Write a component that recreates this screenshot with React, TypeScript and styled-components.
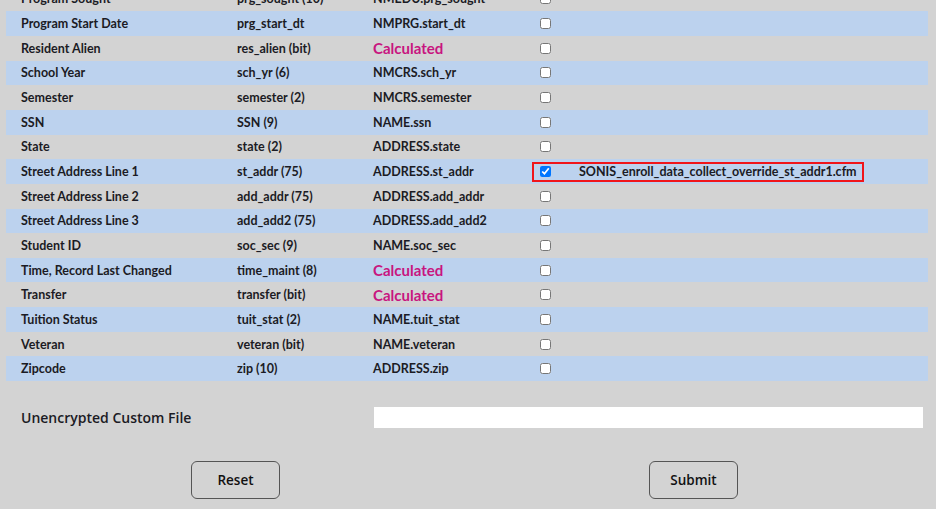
import React from "react";
import styled, { createGlobalStyle } from "styled-components";

type Field = {
  label: string;
  column: string;
  source: string;
  calculated?: boolean;
  override?: string;
};

const fields: Field[] = [
  { label: "Program Sought", column: "prg_sought (10)", source: "NMEDU.prg_sought" },
  { label: "Program Start Date", column: "prg_start_dt", source: "NMPRG.start_dt" },
  { label: "Resident Alien", column: "res_alien (bit)", source: "Calculated", calculated: true },
  { label: "School Year", column: "sch_yr (6)", source: "NMCRS.sch_yr" },
  { label: "Semester", column: "semester (2)", source: "NMCRS.semester" },
  { label: "SSN", column: "SSN (9)", source: "NAME.ssn" },
  { label: "State", column: "state (2)", source: "ADDRESS.state" },
  {
    label: "Street Address Line 1",
    column: "st_addr (75)",
    source: "ADDRESS.st_addr",
    override: "SONIS_enroll_data_collect_override_st_addr1.cfm",
  },
  { label: "Street Address Line 2", column: "add_addr (75)", source: "ADDRESS.add_addr" },
  { label: "Street Address Line 3", column: "add_add2 (75)", source: "ADDRESS.add_add2" },
  { label: "Student ID", column: "soc_sec (9)", source: "NAME.soc_sec" },
  { label: "Time, Record Last Changed", column: "time_maint (8)", source: "Calculated", calculated: true },
  { label: "Transfer", column: "transfer (bit)", source: "Calculated", calculated: true },
  { label: "Tuition Status", column: "tuit_stat (2)", source: "NAME.tuit_stat" },
  { label: "Veteran", column: "veteran (bit)", source: "NAME.veteran" },
  { label: "Zipcode", column: "zip (10)", source: "ADDRESS.zip" },
];

const App = () => {
  return (
    <>
      <GlobalStyle />
      <Table>
        {fields.map((f, i) => (
          <Row key={f.label} $striped={i % 2 === 1}>
            <Cell>{f.label}</Cell>
            <Cell>{f.column}</Cell>
            {f.calculated ? <Calc>Calculated</Calc> : <Cell>{f.source}</Cell>}
            <CheckCell>
              {f.override ? (
                <OverrideBox>
                  <Check type="checkbox" defaultChecked />
                  <OverrideName>{f.override}</OverrideName>
                </OverrideBox>
              ) : (
                <Check type="checkbox" />
              )}
            </CheckCell>
          </Row>
        ))}
      </Table>
      <FileRow>
        <FileLabel>Unencrypted Custom File</FileLabel>
        <FileInput type="text" />
      </FileRow>
      <ButtonBar>
        <Button type="reset">Reset</Button>
        <Button type="submit">Submit</Button>
      </ButtonBar>
    </>
  );
};

export default App;

const GlobalStyle = createGlobalStyle`
  html, body {
    margin: 0;
    padding: 0;
    background: #d3d3d3;
    height: 100%;
    overflow: hidden;
  }
  body {
    font-family: "Lato", "Open Sans", sans-serif;
    color: #1b1b24;
  }
`;

const Table = styled.div`
  margin: -13.4px 8px 0 6px;
`;

const Row = styled.div<{ $striped: boolean }>`
  display: grid;
  grid-template-columns: 216px 136px 159px 1fr;
  align-items: center;
  height: 24.67px;
  padding-left: 15px;
  background: ${(p) => (p.$striped ? "#bcd2ee" : "transparent")};
`;

const Cell = styled.div`
  font-size: 12.5px;
  font-weight: 700;
  white-space: nowrap;
`;

const Calc = styled.div`
  font-size: 15px;
  font-weight: 700;
  color: #c8157f;
  white-space: nowrap;
`;

const CheckCell = styled.div`
  display: flex;
  align-items: center;
  padding-left: 8px;
`;

const Check = styled.input`
  width: 11px;
  height: 11px;
  margin: 0;
`;

const OverrideBox = styled.div`
  display: flex;
  align-items: center;
  gap: 28px;
  height: 16px;
  margin-left: -8px;
  padding: 0 5px 0 6px;
  border: 2px solid #f0151a;
`;

const OverrideName = styled.span`
  font-size: 12.5px;
  font-weight: 700;
  white-space: nowrap;
`;

const FileRow = styled.div`
  display: grid;
  grid-template-columns: 353px 1fr;
  align-items: center;
  margin-top: 26.3px;
  padding: 0 13px 0 21px;
`;

const FileLabel = styled.div`
  font-family: "Open Sans", sans-serif;
  font-size: 14px;
  font-weight: 600;
`;

const FileInput = styled.input`
  height: 21px;
  border: none;
  background: #fff;
  padding: 0 4px;
  box-sizing: border-box;
  outline: none;
`;

const ButtonBar = styled.div`
  display: flex;
  gap: 369px;
  margin-top: 33px;
  padding-left: 191px;
`;

const Button = styled.button`
  width: 89px;
  height: 38px;
  border: 1px solid #555;
  border-radius: 6px;
  background: transparent;
  font-family: "Open Sans", sans-serif;
  font-size: 13.5px;
  font-weight: 600;
  color: #111;
`;
